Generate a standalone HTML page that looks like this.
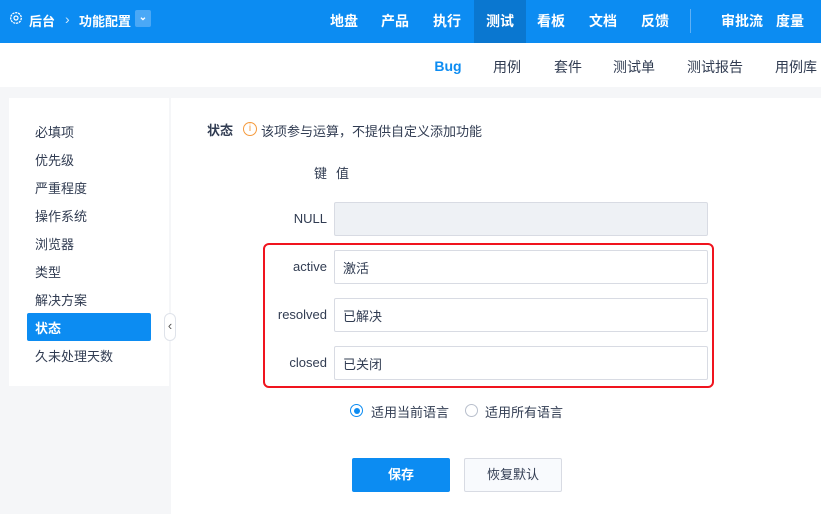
<!DOCTYPE html><html><head><meta charset="utf-8"><style>
*{margin:0;padding:0;box-sizing:border-box}
body{width:821px;height:514px;overflow:hidden;background:#f5f6f8;font-family:"Liberation Sans","Noto Sans CJK SC",sans-serif;font-size:13px;color:#313c52;position:relative}
.a{position:absolute;white-space:nowrap}
.hd{position:absolute;left:0;top:0;width:821px;height:43px;background:#0c8cf2;color:#fff;font-weight:bold;font-size:14px}
.hd .a{top:11px;transform:translateX(-50%)}
.sub{position:absolute;left:0;top:43px;width:821px;height:44px;background:#fff;font-size:14px}
.sub .a{top:14px;transform:translateX(-50%)}
.side{position:absolute;left:9px;top:98px;width:160px;height:288px;background:#fff}
.main{position:absolute;left:171px;top:98px;width:650px;height:416px;background:#fff}
.lbl{position:absolute;right:494px;text-align:right}
.inp{position:absolute;left:334px;width:374px;height:34px;border:1px solid #d8dbe3;border-radius:2px;padding:7px 8px;background:#fff}
</style></head><body>
<div class="hd">
<svg class="a" style="left:9px;top:11px;transform:none" width="14" height="14" viewBox="0 0 14 14"><circle cx="7" cy="7" r="5.3" fill="none" stroke="#fff" stroke-width="1.3" stroke-dasharray="2.2 0.8"/><circle cx="7" cy="7" r="2" fill="none" stroke="#fff" stroke-width="1.2"/></svg>
<span class="a" style="left:29px;transform:none;font-size:13px">后台</span>
<span class="a" style="left:65px;transform:none;font-weight:normal;opacity:.8">›</span>
<span class="a" style="left:79px;transform:none;font-size:13px">功能配置</span>
<span class="a" style="left:135px;top:10px;transform:none;width:16px;height:17px;background:#4aa8f6;border-radius:2px;font-size:10px;text-align:center;line-height:15px">⌄</span>
<div class="a" style="left:474px;top:0;width:52px;height:43px;background:#0a77d0;transform:none"></div>
<span class="a" style="left:344px">地盘</span><span class="a" style="left:395px">产品</span><span class="a" style="left:447px">执行</span><span class="a" style="left:500px">测试</span><span class="a" style="left:551px">看板</span><span class="a" style="left:603px">文档</span><span class="a" style="left:655px">反馈</span>
<div class="a" style="left:690px;top:9px;width:1px;height:24px;background:#5fb0f5;transform:none"></div>
<span class="a" style="left:742px">审批流</span><span class="a" style="left:790px">度量</span>
</div>
<div class="sub">
<span class="a" style="left:448px;color:#0c8cf2;font-weight:bold;top:15px">Bug</span><span class="a" style="left:507px">用例</span><span class="a" style="left:568px">套件</span><span class="a" style="left:634px">测试单</span><span class="a" style="left:715px">测试报告</span><span class="a" style="left:796px">用例库</span>
</div>
<div class="side"></div>
<div class="a" style="left:27px;top:313px;width:124px;height:28px;background:#0c8cf2;border-radius:2px"></div>
<span class="a" style="left:35px;top:122px">必填项</span>
<span class="a" style="left:35px;top:150px">优先级</span>
<span class="a" style="left:35px;top:178px">严重程度</span>
<span class="a" style="left:35px;top:206px">操作系统</span>
<span class="a" style="left:35px;top:234px">浏览器</span>
<span class="a" style="left:35px;top:262px">类型</span>
<span class="a" style="left:35px;top:290px">解决方案</span>
<span class="a" style="left:35px;top:318px;color:#fff;font-weight:bold">状态</span>
<span class="a" style="left:35px;top:346px">久未处理天数</span>
<div class="main"></div>
<div class="a" style="left:164px;top:313px;width:12px;height:28px;background:#fff;border:1px solid #dfe3ea;border-radius:6px;font-size:13px;text-align:center;line-height:24px;color:#555">‹</div>
<span class="a" style="left:207px;top:120px;font-weight:bold">状态</span>
<span class="a" style="left:243px;top:122px;width:14px;height:14px;border:1px solid #f59a3c;border-radius:50%;color:#f59a3c;font-size:10px;text-align:center;line-height:12px">i</span>
<span class="a" style="left:261px;top:121px">该项参与运算，不提供自定义添加功能</span>
<span class="a" style="left:314px;top:163px">键</span><span class="a" style="left:336px;top:163px">值</span>
<span class="lbl" style="top:211px">NULL</span>
<div class="inp" style="top:202px;background:#eef1f5"></div>
<span class="lbl" style="top:259px">active</span><div class="inp" style="top:250px">激活</div>
<span class="lbl" style="top:307px">resolved</span><div class="inp" style="top:298px">已解决</div>
<span class="lbl" style="top:355px">closed</span><div class="inp" style="top:346px">已关闭</div>
<div class="a" style="left:263px;top:243px;width:451px;height:145px;border:2px solid #f0141e;border-radius:6px"></div>
<span class="a" style="left:350px;top:404px;width:13px;height:13px;border:1px solid #0c8cf2;border-radius:50%"></span>
<span class="a" style="left:353.5px;top:407.5px;width:6px;height:6px;background:#0c8cf2;border-radius:50%"></span>
<span class="a" style="left:371px;top:402px">适用当前语言</span>
<span class="a" style="left:465px;top:404px;width:13px;height:13px;border:1px solid #b8bfcc;border-radius:50%"></span>
<span class="a" style="left:485px;top:402px">适用所有语言</span>
<div class="a" style="left:352px;top:458px;width:98px;height:34px;background:#0c8cf2;border-radius:2px;color:#fff;font-weight:bold;text-align:center;line-height:34px">保存</div>
<div class="a" style="left:464px;top:458px;width:98px;height:34px;background:#f8fafd;border:1px solid #d8dbe3;border-radius:2px;text-align:center;line-height:32px">恢复默认</div>
</body></html>
